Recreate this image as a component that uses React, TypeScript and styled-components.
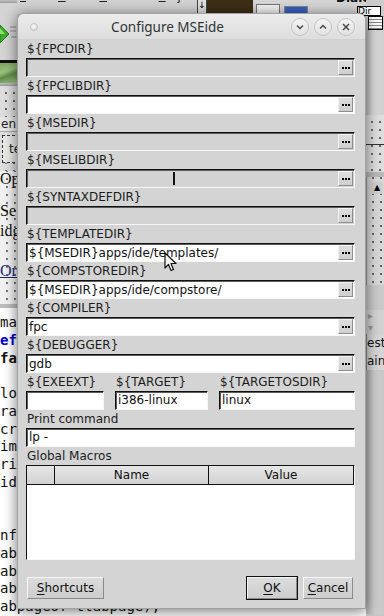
import React from 'react';
import styled, { createGlobalStyle } from 'styled-components';

const GlobalStyle = createGlobalStyle`
  html, body {
    margin: 0;
    padding: 0;
  }
  body {
    width: 384px;
    height: 616px;
    overflow: hidden;
    background: #c6c6c6;
    font-family: "DejaVu Sans", "Liberation Sans", sans-serif;
  }
`;

interface IField {
  name: string;
  value?: string;
  disabled?: boolean;
  caret?: number;
}

const fields: IField[] = [
  { name: '${FPCDIR}', disabled: true },
  { name: '${FPCLIBDIR}' },
  { name: '${MSEDIR}', disabled: true },
  { name: '${MSELIBDIR}', disabled: true, caret: 146 },
  { name: '${SYNTAXDEFDIR}', disabled: true },
  { name: '${TEMPLATEDIR}', value: '${MSEDIR}apps/ide/templates/' },
  { name: '${COMPSTOREDIR}', value: '${MSEDIR}apps/ide/compstore/' },
  { name: '${COMPILER}', value: 'fpc' },
  { name: '${DEBUGGER}', value: 'gdb' },
];

const codeLines = [
  { text: 'ma' },
  { text: 'ef', kind: 'kw' },
  { text: 'fa', kind: 'bold' },
  { text: '' },
  { text: 'lo' },
  { text: 'ra' },
  { text: 'cr' },
  { text: 'im' },
  { text: 'ri' },
  { text: 'id' },
  { text: '' },
  { text: '' },
  { text: 'nf' },
  { text: 'ab' },
  { text: 'ab' },
  { text: 'ab' },
  { text: 'abpageof ttabpage);' },
];

function Dots() {
  return (
    <svg width='8' height='2' viewBox='0 0 8 2'>
      <rect x='0' y='0' width='2' height='2' fill='#000' />
      <rect x='3' y='0' width='2' height='2' fill='#000' />
      <rect x='6' y='0' width='2' height='2' fill='#000' />
    </svg>
  );
}

function TitleIcon({ kind }: { kind: 'min' | 'max' | 'close' }) {
  return (
    <svg width='18' height='18' viewBox='0 0 18 18'>
      {kind === 'min' && <polyline points='6,7.5 9,10.5 12,7.5' fill='none' stroke='#4a4a4a' strokeWidth='1.5' />}
      {kind === 'max' && <polyline points='6,10.5 9,7.5 12,10.5' fill='none' stroke='#4a4a4a' strokeWidth='1.5' />}
      {kind === 'close' && (
        <path d='M6 6 L12 12 M12 6 L6 12' fill='none' stroke='#4a4a4a' strokeWidth='1.5' />
      )}
    </svg>
  );
}

function EditBox({ field }: { field: IField }) {
  return (
    <Edit $disabled={field.disabled}>
      <EditText>{field.value}</EditText>
      {field.caret !== undefined && <Caret style={{ left: field.caret }} />}
      <EllipsisButton>
        <Dots />
      </EllipsisButton>
    </Edit>
  );
}

function App() {
  return (
    <Desktop>
      <GlobalStyle />

      <TopStrip>
        <MenuArea>
          <MenuItem><u>F</u>ile</MenuItem>
          <MenuItem><u>E</u>dit</MenuItem>
          <MenuItem><u>S</u>earch</MenuItem>
          <MenuItem><u>P</u>roject</MenuItem>
          <MenuItem><u>T</u>arget</MenuItem>
        </MenuArea>
        <ArrowBox>↓</ArrowBox>
        <DarkArea />
        <ToolArea>
          <SmallBox />
          <BlueTab />
          <TabLabel>Dialog</TabLabel>
        </ToolArea>
      </TopStrip>

      <LeftPane>
        <PaneLine />
        <IconArea>
          <svg width='17' height='24' viewBox='0 0 17 24'>
            <polygon points='0,2 9,11 0,20' fill='#3fae2a' stroke='#2a7a1c' strokeWidth='1' />
            <polygon points='0,5 5,11 0,11' fill='#8ee070' />
            <line x1='10' y1='4' x2='16' y2='4' stroke='#8a8a8a' />
            <line x1='10' y1='8' x2='16' y2='8' stroke='#8a8a8a' />
            <line x1='11' y1='14' x2='16' y2='14' stroke='#8a8a8a' />
          </svg>
        </IconArea>
        <BlackBar />
        <GreenBar />
        <PaneLine />
        <DotGrid $h={31} />
        <SmallText>en</SmallText>
        <DotGrid $h={39}>
          <DashBox>te</DashBox>
        </DotGrid>
        <FormArea>
          <SerifLabel $top={0}>Op</SerifLabel>
          <SerifLabel $top={32}>Se</SerifLabel>
          <SerifLabel $top={52}>idg</SerifLabel>
          <SerifLabel $top={92} $link>Or</SerifLabel>
        </FormArea>
      </LeftPane>

      <CodePane>
        {codeLines.map((line, i) => (
          <CodeLine key={i} $kind={line.kind}>
            {line.text || '\u00a0'}
          </CodeLine>
        ))}
      </CodePane>

      <RightPane>
        <RightBlock $h={28} $bg='#cbcbcb' />
        <RightBlock $h={87} $bg='linear-gradient(90deg, #bdbdbd, #d9d9d9 40%, #cfcfcf)' />
        <DotGrid $h={57} $dashed />
        <RightBlock $h={5} $bg='#b8b8b8' />
        <ScrollColumn>
          <UpArrow>▲</UpArrow>
        </ScrollColumn>
        <RightBlock $h={25} $bg='#cacaca' />
        <ArrowButtons>
          <span>▸</span>
          <span>▾</span>
        </ArrowButtons>
        <RightText>est.</RightText>
        <RightText>ain</RightText>
        <RightBlock $h={244} $bg='linear-gradient(90deg, #b0b0b0, #cdcdcd 45%, #c8c8c8)' />
      </RightPane>

      <DirBox>Dir</DirBox>
      <TinyWidget />

      <Dialog>
        <TitleBar>
          <WindowDot />
          <Title>Configure MSEide</Title>
          <TitleButtons>
            <TitleButton><TitleIcon kind='min' /></TitleButton>
            <TitleButton><TitleIcon kind='max' /></TitleButton>
            <TitleButton><TitleIcon kind='close' /></TitleButton>
          </TitleButtons>
        </TitleBar>

        <Body>
          {fields.map((field) => (
            <Field key={field.name}>
              <Label>{field.name}</Label>
              <EditBox field={field} />
            </Field>
          ))}

          <TripleRow>
            <Field>
              <Label>${'{EXEEXT}'}</Label>
              <PlainEdit $w={78} />
            </Field>
            <Field>
              <Label>${'{TARGET}'}</Label>
              <PlainEdit $w={93}>i386-linux</PlainEdit>
            </Field>
            <Field>
              <Label>${'{TARGETOSDIR}'}</Label>
              <PlainEdit $w={136}>linux</PlainEdit>
            </Field>
          </TripleRow>

          <Field>
            <Label>Print command</Label>
            <PlainEdit>lp -</PlainEdit>
          </Field>

          <Field>
            <Label>Global Macros</Label>
            <Grid>
              <GridHeader>
                <HeaderCell $w={28} />
                <HeaderCell $w={154}>Name</HeaderCell>
                <HeaderCell $w={145}>Value</HeaderCell>
              </GridHeader>
              <GridBody />
            </Grid>
          </Field>
        </Body>

        <Footer>
          <PushButton $w={77}><u>S</u>hortcuts</PushButton>
          <FooterRight>
            <PushButton $w={50} $default><u>O</u>K</PushButton>
            <PushButton $w={50}><u>C</u>ancel</PushButton>
          </FooterRight>
        </Footer>
      </Dialog>

      <Pointer>
        <svg width='13' height='20' viewBox='0 0 13 20'>
          <path d='M1 1 L1 16 L4.5 12.5 L7 18.5 L9.5 17.5 L7 11.5 L12 11.5 Z' fill='#f4f4f4' stroke='#111' strokeWidth='1.2' strokeLinejoin='round' />
        </svg>
      </Pointer>
    </Desktop>
  );
}

const Desktop = styled.div`
  position: relative;
  width: 384px;
  height: 616px;
  overflow: hidden;
  background: #c6c6c6;
`;

/* background windows */

const TopStrip = styled.div`
  position: absolute;
  top: 0;
  left: 0;
  width: 384px;
  height: 14px;
  display: flex;
  overflow: hidden;
`;

const MenuArea = styled.div`
  width: 197px;
  background: #d2d2d2;
  display: flex;
  gap: 18px;
  padding-left: 20px;
  box-sizing: border-box;
  overflow: hidden;
`;

const MenuItem = styled.span`
  font-size: 12px;
  line-height: 14px;
  margin-top: -11px;
  color: #222;
`;

const ArrowBox = styled.div`
  width: 8px;
  background: #e0e0e0;
  border: 1px solid #444;
  border-top: none;
  font-size: 9px;
  line-height: 10px;
  text-align: center;
  color: #000;
`;

const DarkArea = styled.div`
  width: 46px;
  background: #3d2e17;
`;

const ToolArea = styled.div`
  flex: 1;
  background: #d6d6d6;
  display: flex;
  align-items: flex-end;
  gap: 4px;
  padding-left: 3px;
  border-bottom: 1px solid #9a9a9a;
  box-sizing: border-box;
`;

const SmallBox = styled.div`
  width: 22px;
  height: 8px;
  background: #f2f2f2;
  border: 1px solid #777;
  border-bottom: none;
`;

const BlueTab = styled.div`
  width: 22px;
  height: 6px;
  background: #3a5ec0;
  border: 1px solid #888;
  border-bottom: none;
`;

const TabLabel = styled.div`
  align-self: flex-start;
  margin-left: 24px;
  margin-top: -9px;
  font-size: 12px;
  font-weight: bold;
  line-height: 14px;
  color: #111;
`;

const LeftPane = styled.div`
  position: absolute;
  top: 0;
  left: 0;
  width: 17px;
  height: 304px;
  display: flex;
  flex-direction: column;
  background: #cfcfcf;
  overflow: hidden;
`;

const PaneLine = styled.div`
  height: 3px;
  flex-shrink: 0;
  background: linear-gradient(#c2c2c2, #9c9c9c);
`;

const IconArea = styled.div`
  height: 57px;
  flex-shrink: 0;
  display: flex;
  align-items: center;
  padding-top: 6px;
  box-sizing: border-box;
  background: #d4d4d4;
`;

const BlackBar = styled.div`
  height: 3px;
  flex-shrink: 0;
  background: #121212;
`;

const GreenBar = styled.div`
  height: 20px;
  flex-shrink: 0;
  background: linear-gradient(160deg, #7aa560 0%, #9cc07e 40%, #5f8e48 60%, #a8c78e 100%);
`;

const DotGrid = styled.div<{ $h: number; $dashed?: boolean }>`
  position: relative;
  height: ${(p) => p.$h}px;
  flex-shrink: 0;
  background-color: #dedede;
  background-image: radial-gradient(circle, #222 0.6px, transparent 0.9px)
    ${(p) => (p.$dashed ? ', linear-gradient(transparent 29px, #333 29px, #333 30px, transparent 30px)' : '')};
  background-size: 8px 8px ${(p) => (p.$dashed ? ', 100% 100%' : '')};
  background-position: 2px 3px ${(p) => (p.$dashed ? ', 0 0' : '')};
`;

const SmallText = styled.div`
  height: 14px;
  flex-shrink: 0;
  background: #e6e6e6;
  border-bottom: 1px solid #aaa;
  font-size: 12px;
  line-height: 14px;
  color: #222;
  padding-left: 1px;
`;

const DashBox = styled.div`
  position: absolute;
  left: 2px;
  top: 3px;
  width: 20px;
  height: 26px;
  border: 1px dashed #333;
  background: #e8e8e8;
  font-size: 12px;
  line-height: 26px;
  padding-left: 6px;
  color: #222;
`;

const FormArea = styled.div`
  position: relative;
  flex: 1;
  background-color: #f2f2f2;
  background-image: radial-gradient(circle, #333 0.6px, transparent 0.9px);
  background-size: 8px 8px;
  background-position: 3px 4px;
`;

const SerifLabel = styled.div<{ $top: number; $link?: boolean }>`
  position: absolute;
  left: 0;
  top: ${(p) => p.$top}px;
  font-family: "Liberation Serif", serif;
  font-size: 16px;
  line-height: 16px;
  color: ${(p) => (p.$link ? '#1a2a7a' : '#111')};
  text-decoration: ${(p) => (p.$link ? 'underline' : 'none')};
`;

const CodePane = styled.div`
  position: absolute;
  left: 0;
  top: 304px;
  width: 366px;
  height: 312px;
  background: #fff;
  border-top: 4px solid #bdbdbd;
  padding-top: 6px;
  box-sizing: border-box;
`;

const CodeLine = styled.div<{ $kind?: string }>`
  font-family: "DejaVu Sans Mono", "Liberation Mono", monospace;
  font-size: 14px;
  line-height: 17.75px;
  white-space: pre;
  color: ${(p) => (p.$kind === 'kw' ? '#0000c8' : '#111')};
  font-weight: ${(p) => (p.$kind ? 'bold' : 'normal')};
`;

const RightPane = styled.div`
  position: absolute;
  top: 0;
  left: 366px;
  width: 18px;
  height: 616px;
  display: flex;
  flex-direction: column;
  background: #c8c8c8;
`;

const RightBlock = styled.div<{ $h: number; $bg: string }>`
  height: ${(p) => p.$h}px;
  flex-shrink: 0;
  background: ${(p) => p.$bg};
`;

const ScrollColumn = styled.div`
  height: 108px;
  flex-shrink: 0;
  background-color: #d8d8d8;
  background-image: radial-gradient(circle, #222 0.6px, transparent 0.9px);
  background-size: 8px 8px;
  background-position: 2px 5px;
  border-left: 1px solid #999;
  box-sizing: border-box;
  padding: 5px 0 0 4px;
`;

const UpArrow = styled.div`
  width: 12px;
  height: 12px;
  background: #cfcfcf;
  font-size: 8px;
  line-height: 12px;
  text-align: center;
  color: #000;
`;

const ArrowButtons = styled.div`
  height: 24px;
  flex-shrink: 0;
  display: flex;
  flex-direction: column;
  font-size: 10px;
  line-height: 12px;
  color: #999;
  padding-left: 2px;
  background: #d2d2d2;
`;

const RightText = styled.div`
  height: 18px;
  flex-shrink: 0;
  font-size: 12px;
  line-height: 18px;
  color: #111;
  background: #d6d6d6;
  border-left: 1px solid #888;
  white-space: nowrap;
  overflow: hidden;
`;

const DirBox = styled.div`
  position: absolute;
  left: 357px;
  top: 6px;
  width: 22px;
  height: 8px;
  border: 1px solid #000;
  background: #fff;
  font-size: 9px;
  line-height: 8px;
  overflow: hidden;
  color: #000;
`;

const TinyWidget = styled.div`
  position: absolute;
  left: 368px;
  top: 16px;
  width: 13px;
  height: 12px;
  border: 1px solid #000;
  background-color: #fafafa;
  background-image: repeating-linear-gradient(#fafafa 0 2px, #888 2px 3px);
`;

/* dialog */

const Dialog = styled.div`
  position: absolute;
  left: 17px;
  top: 13px;
  width: 349px;
  height: 596px;
  box-sizing: border-box;
  display: flex;
  flex-direction: column;
  background: #d4d4d4;
  border: 1px solid #a2a2a2;
  border-radius: 7px 7px 0 0;
  box-shadow: 0 2px 14px rgba(0, 0, 0, 0.55);
  overflow: hidden;
`;

const TitleBar = styled.div`
  height: 26px;
  flex-shrink: 0;
  display: flex;
  align-items: center;
  padding: 0 10px 0 12px;
  background: linear-gradient(#ececec, #dedede);
  border-bottom: 1px solid #d0d0d0;
  box-sizing: border-box;
`;

const WindowDot = styled.div`
  width: 6px;
  height: 6px;
  border-radius: 50%;
  background: radial-gradient(circle at 40% 35%, #fafafa, #d0d0d0);
  border: 1px solid #c4c4c4;
`;

const Title = styled.div`
  flex: 1;
  text-align: center;
  padding-left: 6px;
  font-family: "Noto Sans", "DejaVu Sans", sans-serif;
  font-size: 13.5px;
  color: #2e3436;
`;

const TitleButtons = styled.div`
  display: flex;
  gap: 5px;
`;

const TitleButton = styled.div`
  width: 18px;
  height: 18px;
  border-radius: 50%;
  box-sizing: border-box;
  border: 1px solid #c3c3c3;
  background: linear-gradient(#f4f4f4, #e2e2e2);
  display: flex;
  align-items: center;
  justify-content: center;

  svg {
    margin: -1px;
  }
`;

const Body = styled.div`
  display: flex;
  flex-direction: column;
  padding: 0 10px 0 8px;
`;

const Field = styled.div`
  display: flex;
  flex-direction: column;
`;

const Label = styled.div`
  height: 18px;
  font-size: 12px;
  line-height: 19px;
  padding-left: 1px;
  color: #1c1c1c;
  white-space: nowrap;
`;

const Edit = styled.div<{ $disabled?: boolean }>`
  position: relative;
  height: 19px;
  box-sizing: border-box;
  display: flex;
  align-items: center;
  background: ${(p) => (p.$disabled ? '#d3d3d3' : '#fff')};
  border-top: 1px solid #111;
  border-left: 1px solid #111;
  border-bottom: 1px solid #f7f7f7;
  border-right: 1px solid #f7f7f7;
  box-shadow: inset 1px 1px 0 #5c5c5c;
  padding-left: 2px;
`;

const EditText = styled.span`
  flex: 1;
  font-size: 12px;
  color: #111;
  white-space: nowrap;
  overflow: hidden;
`;

const Caret = styled.div`
  position: absolute;
  top: 2px;
  width: 2px;
  height: 13px;
  background: #111;
`;

const EllipsisButton = styled.div`
  width: 15px;
  height: 15px;
  box-sizing: border-box;
  margin-right: 1px;
  display: flex;
  align-items: center;
  justify-content: center;
  padding-top: 1px;
  background: linear-gradient(#dedede, #cfcfcf);
  border-top: 1px solid #f4f4f4;
  border-left: 1px solid #f4f4f4;
  border-bottom: 1px solid #8c8c8c;
  border-right: 1px solid #8c8c8c;
`;

const TripleRow = styled.div`
  display: flex;
  gap: 11px;
`;

const PlainEdit = styled.div<{ $w?: number }>`
  width: ${(p) => (p.$w ? `${p.$w}px` : 'auto')};
  height: 19px;
  box-sizing: border-box;
  background: #fff;
  border-top: 1px solid #111;
  border-left: 1px solid #111;
  border-bottom: 1px solid #f7f7f7;
  border-right: 1px solid #f7f7f7;
  box-shadow: inset 1px 1px 0 #5c5c5c;
  padding-left: 2px;
  font-size: 12px;
  line-height: 17px;
  color: #111;
  white-space: nowrap;
`;

const Grid = styled.div`
  height: 95px;
  box-sizing: border-box;
  display: flex;
  flex-direction: column;
  background: #fff;
  border-top: 1px solid #111;
  border-left: 1px solid #111;
  border-bottom: 1px solid #f7f7f7;
  border-right: 1px solid #f7f7f7;
`;

const GridHeader = styled.div`
  height: 19px;
  flex-shrink: 0;
  display: flex;
  box-sizing: border-box;
  border-bottom: 1px solid #111;
  background: linear-gradient(#e6e6e6, #d2d2d2);
`;

const HeaderCell = styled.div<{ $w: number }>`
  width: ${(p) => p.$w}px;
  box-sizing: border-box;
  border-right: 1px solid #111;
  font-size: 12px;
  line-height: 18px;
  text-align: center;
  color: #111;
`;

const GridBody = styled.div`
  flex: 1;
  background: #fff;
`;

const Footer = styled.div`
  display: flex;
  justify-content: space-between;
  margin-top: 17px;
  padding: 0 12px 0 9px;
`;

const FooterRight = styled.div`
  display: flex;
  gap: 6px;
`;

const PushButton = styled.div<{ $w: number; $default?: boolean }>`
  width: ${(p) => p.$w}px;
  height: 22px;
  box-sizing: border-box;
  display: flex;
  align-items: center;
  justify-content: center;
  font-size: 12px;
  color: #111;
  background: linear-gradient(#dcdcdc, #cdcdcd);
  border-top: 1px solid #f6f6f6;
  border-left: 1px solid #f6f6f6;
  border-bottom: 1px solid #8a8a8a;
  border-right: 1px solid #8a8a8a;
  outline: ${(p) => (p.$default ? '1px solid #111' : 'none')};

  u {
    text-underline-offset: 2px;
  }
`;

const Pointer = styled.div`
  position: absolute;
  left: 164px;
  top: 252px;
  width: 13px;
  height: 20px;
`;

export default App;
